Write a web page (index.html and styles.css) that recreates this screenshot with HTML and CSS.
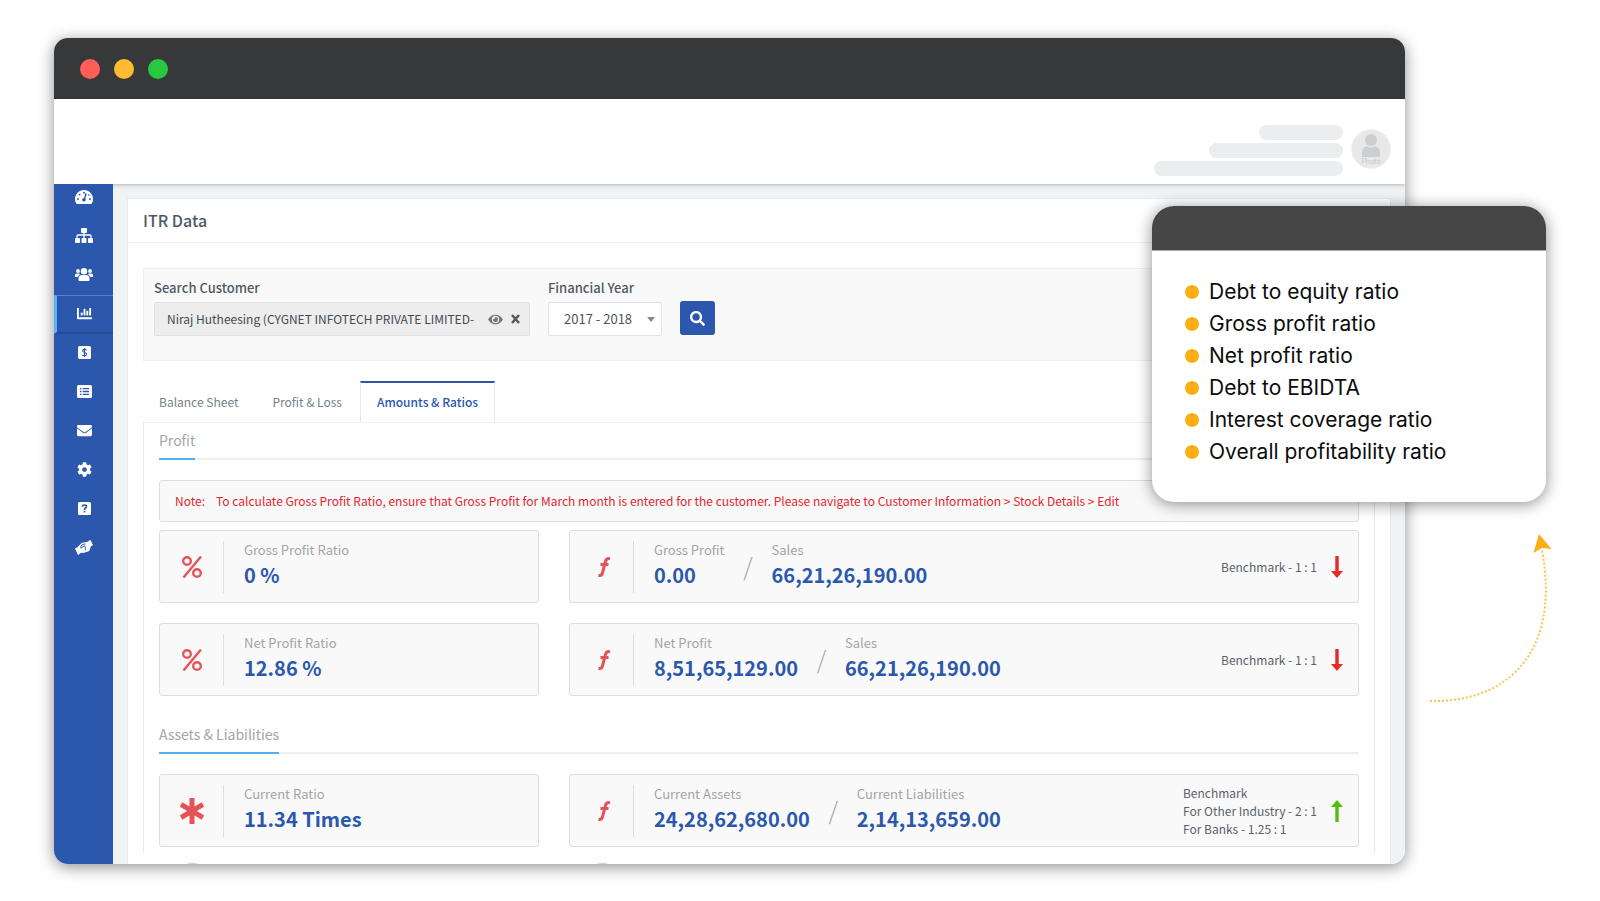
FILE: index.html
```html
<!DOCTYPE html>
<html lang="en">
<head>
<meta charset="utf-8">
<title>ITR Data</title>
<link rel="stylesheet" href="styles.css">
</head>
<body>
<svg class="defs" aria-hidden="true">
  <symbol id="percent" viewBox="0 0 20 22"><g fill="none" stroke="currentColor" stroke-width="2.400"><circle cx="5" cy="5" r="3.800"/><circle cx="15" cy="17" r="3.800"/><path d="M19 .5 1.500 21.500"/></g></symbol>
  <symbol id="func" viewBox="0 0 12 20"><path d="M12 1.700Q8.300 1 7.500 4.500L4.300 16.500Q3.700 18.700.5 18.500M2.500 7.500h8" fill="none" stroke="currentColor" stroke-width="3"/></symbol>
  <symbol id="asterisk" viewBox="0 0 24 26"><path d="M12 0v26M1 6.500l22 13M23 6.500l-22 13" fill="none" stroke="currentColor" stroke-width="5"/></symbol>
  <symbol id="arrow" viewBox="0 0 12 22"><path d="M4.300 0h3.400v15H12l-6 7-6-7h4.300z" fill="currentColor"/></symbol>
</svg>

<div class="window">
  <div class="titlebar"><i class="dot red"></i><i class="dot yellow"></i><i class="dot green"></i></div>
  <header class="header">
    <div class="lines"><i class="line short"></i><i class="line medium"></i><i class="line long"></i></div>
    <div class="avatar">
      <svg width="20" height="24" viewBox="0 0 20 24"><circle cx="10" cy="6" r="6" fill="#ccced1"/><path d="M1 23v-4c0-4 2-6 5-7 3 2 5 2 8 0 3 1 5 3 5 7v4z" fill="#ccced1"/></svg>
      <span>Photo</span>
    </div>
  </header>

  <div class="body">
    <nav class="sidebar">
      <a href="#" aria-label="Dashboard"><svg width="18" height="14" viewBox="0 32 576 448"><path d="M288 32C129 32 0 161 0 320c0 53 14 102 39 145 6 9 16 15 27 15h444c11 0 21-6 27-15 25-43 39-92 39-145 0-159-129-288-288-288z" fill="#fff"/><g fill="#2b58ad"><circle cx="288" cy="118" r="30"/><circle cx="146" cy="178" r="30"/><circle cx="96" cy="320" r="30"/><circle cx="480" cy="320" r="30"/><circle cx="440" cy="190" r="26"/><path d="M335 130l42 14-48 160c30 30 18 92-41 96-56-2-80-60-40-96 10-10 24-14 40-16z"/></g></svg></a>
      <a href="#" aria-label="Hierarchy"><svg width="18" height="15" viewBox="0 0 18 15" fill="#fff"><rect x="6" width="6" height="5" rx="1"/><rect y="10" width="5" height="5" rx="1"/><rect x="6.500" y="10" width="5" height="5" rx="1"/><rect x="13" y="10" width="5" height="5" rx="1"/><path d="M2 10V8q0-1 1-1h12q1 0 1 1v2M9 5v5" fill="none" stroke="#fff" stroke-width="1.300"/></svg></a>
      <a href="#" aria-label="Customers"><svg width="18" height="13" viewBox="0 0 18 13" fill="#fff"><circle cx="9" cy="3.200" r="3.200"/><circle cx="3" cy="3" r="1.900"/><circle cx="15" cy="3" r="1.900"/><path d="M4 13q-.5 0-.5-1v-1.500C3.500 8 5 7 6.500 7h5c1.500 0 3 1 3 3.500V12q0 1-.7 1zM0 9V7.500Q0 5.500 2 5.500h2q.8 0 1.300.5Q3.300 7 3 9zM18 9V7.500q0-2-2-2h-2q-.8 0-1.300.5 2 1 2.300 3z"/></svg></a>
      <a href="#" class="active" aria-label="Reports"><svg width="15" height="15" viewBox="0 0 512 512" fill="#fff"><path d="M333 320h38q13 0 13-13V173q0-13-13-13h-38q-13 0-13 13v134q0 13 13 13zm96 0h38q13 0 13-13V77q0-13-13-13h-38q-13 0-13 13v230q0 13 13 13zm-288 0h38q13 0 13-13v-70q0-13-13-13h-38q-13 0-13 13v70q0 13 13 13zm96 0h38q13 0 13-13V109q0-13-13-13h-38q-13 0-13 13v198q0 13 13 13zM496 384H64V80q0-16-16-16H16Q0 64 0 80v336q0 32 32 32h464q16 0 16-16v-32q0-16-16-16z"/></svg></a>
      <a href="#" aria-label="Payments"><svg width="13" height="13" viewBox="0 0 13 13"><rect width="13" height="13" rx="1.500" fill="#fff"/><path d="M8.600 4.300Q8 3.400 6.500 3.400 4.600 3.400 4.600 4.800 4.600 6 6.500 6.500 8.600 7 8.600 8.300 8.600 9.700 6.500 9.700 4.900 9.700 4.300 8.700M6.500 2v9" fill="none" stroke="#2b58ad" stroke-width="1.100"/></svg></a>
      <a href="#" aria-label="Lists"><svg width="15" height="13" viewBox="0 0 15 13"><rect width="15" height="13" rx="1.500" fill="#fff"/><path d="M3 3.700h1.500M3 6.500h1.500M3 9.300h1.500M5.800 3.700H12M5.800 6.500H12M5.800 9.300H12" stroke="#2b58ad" stroke-width="1.300"/></svg></a>
      <a href="#" aria-label="Messages"><svg width="15" height="15" viewBox="0 0 512 512" fill="#fff"><path d="M502 191c4-3 10 0 10 5v204c0 27-21 48-48 48H48c-27 0-48-21-48-48V196c0-5 6-8 10-5 22 17 52 40 154 114 21 15 57 47 92 47 36 0 72-33 92-47 102-74 132-97 154-114zM256 320c23 0 57-29 73-41 133-97 143-105 174-129 6-5 9-12 9-19v-19c0-27-21-48-48-48H48c-27 0-48 21-48 48v19c0 7 3 14 9 19 31 24 41 32 174 129 16 12 50 41 73 41z"/></svg></a>
      <a href="#" aria-label="Settings"><svg width="15" height="15" viewBox="0 0 512 512" fill="#fff"><path d="M487.400 315.700l-42.600-24.600c4.300-23.200 4.300-47 0-70.200l42.600-24.600c4.900-2.800 7.100-8.600 5.500-14-11.100-35.600-30-67.800-54.700-94.600-3.800-4.100-10-5.100-14.800-2.300L380.800 110c-17.900-15.400-38.500-27.300-60.800-35.100V25.800c0-5.600-3.900-10.500-9.400-11.700-36.700-8.200-74.300-7.800-109.200 0-5.500 1.200-9.400 6.100-9.400 11.700V75c-22.200 7.900-42.800 19.800-60.800 35.100L88.700 85.500c-4.900-2.800-11-1.900-14.800 2.300-24.700 26.700-43.600 58.900-54.700 94.600-1.700 5.400.6 11.200 5.500 14L67.300 221c-4.300 23.200-4.300 47 0 70.200l-42.600 24.600c-4.900 2.800-7.100 8.600-5.500 14 11.100 35.600 30 67.800 54.700 94.600 3.800 4.100 10 5.100 14.800 2.300l42.600-24.600c17.900 15.400 38.500 27.300 60.800 35.100v49.200c0 5.600 3.900 10.500 9.400 11.700 36.700 8.200 74.300 7.800 109.200 0 5.500-1.200 9.400-6.100 9.400-11.700v-49.200c22.200-7.900 42.800-19.800 60.800-35.100l42.600 24.600c4.900 2.800 11 1.900 14.800-2.300 24.700-26.700 43.600-58.900 54.700-94.600 1.500-5.500-.7-11.300-5.600-14.100zM256 336c-44.100 0-80-35.900-80-80s35.900-80 80-80 80 35.900 80 80-35.900 80-80 80z"/></svg></a>
      <a href="#" aria-label="Help"><svg width="13" height="13" viewBox="0 0 13 13"><rect width="13" height="13" rx="1.500" fill="#fff"/><path d="M4.400 4.700Q4.500 3 6.500 3t2 1.600Q8.500 5.700 7.200 6.300 6.500 6.700 6.500 7.900M6.500 9v1.600" fill="none" stroke="#2b58ad" stroke-width="1.600"/></svg></a>
      <a href="#" aria-label="Partners"><svg width="18" height="15" viewBox="0 0 18 15"><path d="M0 8.500l2.500-1.300L6 3.600Q7 2.600 8.500 2.500L12 2l2.200-1.500L15.500 0 18 5l-2 1.200-1.500 4q-.6 1.300-2 1.600L8 13l-2-.2L3 15z" fill="#fff"/><path d="M10.500 3.800 7 4.800Q6 5.600 5.700 8q1.500.3 2.300-1.800h2q.7 2 .3 4.300" fill="none" stroke="#2b58ad" stroke-width=".9"/></svg></a>
    </nav>

    <main class="content">
      <section class="panel">
        <h1 class="panel-title">ITR Data</h1>
        <div class="panel-body">
          <form class="filters">
            <div class="field customer">
              <label for="customer">Search Customer</label>
              <div class="customer-box">
                <input id="customer" type="text" value="Niraj Hutheesing (CYGNET INFOTECH PRIVATE LIMITED-" readonly>
                <button type="button" aria-label="View customer"><svg width="15" height="13" viewBox="0 0 576 512"><path fill="#6d7681" d="M572.500 241.400C518.300 135.600 410.900 64 288 64S57.700 135.600 3.500 241.400a32.400 32.400 0 0 0 0 29.200C57.700 376.400 165.100 448 288 448s230.300-71.600 284.500-177.400a32.400 32.400 0 0 0 0-29.200zM288 400a144 144 0 1 1 144-144 144 144 0 0 1-144 144zm0-240a95 95 0 0 0-25.300 3.800 48 48 0 0 1-66.900 66.900A96 96 0 1 0 288 160z"/></svg></button>
                <button type="button" aria-label="Clear customer"><svg width="9" height="10" viewBox="0 0 9 10"><path d="M1 1l7 8M8 1 1 9" stroke="#535b66" stroke-width="2.600"/></svg></button>
              </div>
            </div>
            <div class="field year">
              <label for="year">Financial Year</label>
              <div class="select-box"><select id="year"><option>2017 - 2018</option></select></div>
            </div>
            <button class="search" type="button" aria-label="Search"><svg width="15" height="15" viewBox="0 0 512 512"><path fill="#fff" d="M505 442.700L405.300 343c-4.500-4.500-10.600-7-17-7H372c27.600-35.300 44-79.700 44-128C416 93.100 322.900 0 208 0S0 93.100 0 208s93.100 208 208 208c48.300 0 92.700-16.400 128-44v16.300c0 6.400 2.500 12.500 7 17l99.700 99.700c9.400 9.400 24.600 9.400 33.900 0l28.300-28.300c9.400-9.400 9.400-24.600.1-34zM208 336c-70.700 0-128-57.200-128-128 0-70.700 57.200-128 128-128 70.700 0 128 57.200 128 128 0 70.700-57.200 128-128 128z"/></svg></button>
          </form>

          <div class="tabs">
            <a href="#">Balance Sheet</a>
            <a href="#">Profit &amp; Loss</a>
            <a href="#" class="current">Amounts &amp; Ratios</a>
          </div>

          <div class="tab-panel">
            <h2 class="section"><span>Profit</span></h2>
            <p class="note"><span>Note:</span>To calculate Gross Profit Ratio, ensure that Gross Profit for March month is entered for the customer. Please navigate to Customer Information &gt; Stock Details &gt; Edit</p>
            <div class="row">
              <div class="card">
                <div class="symbol"><svg width="20" height="22"><use href="#percent"/></svg></div>
                <div class="metric"><span>Gross Profit Ratio</span><b>0 %</b></div>
              </div>
              <div class="card">
                <div class="symbol func"><svg width="12" height="20"><use href="#func"/></svg></div>
                <div class="metric"><span>Gross Profit</span><b>0.00</b></div>
                <i class="slash">/</i>
                <div class="metric"><span>Sales</span><b>66,21,26,190.00</b></div>
                <p class="benchmark">Benchmark - 1 : 1</p>
                <svg class="trend down" width="12" height="22"><use href="#arrow"/></svg>
              </div>
            </div>
            <div class="row">
              <div class="card">
                <div class="symbol"><svg width="20" height="22"><use href="#percent"/></svg></div>
                <div class="metric"><span>Net Profit Ratio</span><b>12.86 %</b></div>
              </div>
              <div class="card">
                <div class="symbol func"><svg width="12" height="20"><use href="#func"/></svg></div>
                <div class="metric"><span>Net Profit</span><b>8,51,65,129.00</b></div>
                <i class="slash">/</i>
                <div class="metric"><span>Sales</span><b>66,21,26,190.00</b></div>
                <p class="benchmark">Benchmark - 1 : 1</p>
                <svg class="trend down" width="12" height="22"><use href="#arrow"/></svg>
              </div>
            </div>
            <h2 class="section"><span>Assets &amp; Liabilities</span></h2>
            <div class="row">
              <div class="card">
                <div class="symbol"><svg width="24" height="26"><use href="#asterisk"/></svg></div>
                <div class="metric"><span>Current Ratio</span><b>11.34 Times</b></div>
              </div>
              <div class="card">
                <div class="symbol func"><svg width="12" height="20"><use href="#func"/></svg></div>
                <div class="metric"><span>Current Assets</span><b>24,28,62,680.00</b></div>
                <i class="slash">/</i>
                <div class="metric"><span>Current Liabilities</span><b>2,14,13,659.00</b></div>
                <p class="benchmark">Benchmark<br>For Other Industry - 2 : 1<br>For Banks - 1.25 : 1</p>
                <svg class="trend up" width="12" height="22"><use href="#arrow"/></svg>
              </div>
            </div>
          </div>
          <div class="row next">
            <div><i></i></div>
            <div><i></i></div>
          </div>
        </div>
      </section>
    </main>
  </div>
</div>

<aside class="callout">
  <div class="callout-head"></div>
  <ul>
    <li>Debt to equity ratio</li>
    <li>Gross profit ratio</li>
    <li>Net profit ratio</li>
    <li>Debt to EBIDTA</li>
    <li>Interest coverage ratio</li>
    <li>Overall profitability ratio</li>
  </ul>
</aside>
<svg class="pointer" width="124" height="172" viewBox="1429 532 124 172"><path d="M1430 701C1500 703 1562 660 1542 550" fill="none" stroke="#ffc14d" stroke-width="2" stroke-dasharray="2 2"/><path d="M1539 534l12.500 15-9.500-1-8.500 5z" fill="#fdae14"/></svg>
</body>
</html>
```
FILE: styles.css
```css
* { box-sizing: border-box; }
body {
  margin: 0;
  padding: 38px 195px 37px 54px;
  position: relative;
  height: 100vh;
  overflow: hidden;
  background: #fff;
  color: #4e5966;
  font: 13px/18px "Noto Sans CJK SC", "Noto Sans", sans-serif;
}
h1, h2, p, ul { margin: 0; padding: 0; font-weight: 400; }
a { color: inherit; text-decoration: none; }
button { border: 0; padding: 0; background: none; display: flex; align-items: center; justify-content: center; }
svg { display: block; flex: none; }
.defs { position: absolute; width: 0; height: 0; }

.window {
  height: 100%;
  display: flex;
  flex-direction: column;
  overflow: hidden;
  border-radius: 14px;
  background: #fff;
  box-shadow: 0 3px 16px rgba(0, 0, 0, .45);
}
.titlebar { flex: none; height: 61px; background: #373839; display: flex; align-items: center; gap: 14px; padding-left: 26px; }
.dot { width: 20px; height: 20px; border-radius: 50%; }
.red { background: #ff5f57; }
.yellow { background: #febc2e; }
.green { background: #28c840; }

.header {
  flex: none;
  height: 85px;
  display: flex;
  justify-content: flex-end;
  align-items: flex-end;
  gap: 8px;
  padding: 0 14px 8px 0;
  background: #fff;
  box-shadow: 0 1px 4px rgba(0, 0, 0, .25);
  z-index: 1;
}
.lines { display: flex; flex-direction: column; align-items: flex-end; gap: 3px; }
.line { height: 15px; border-radius: 8px; background: #ecedef; }
.short { width: 84px; }
.medium { width: 134px; }
.long { width: 189px; }
.avatar {
  width: 40px;
  height: 40px;
  margin-bottom: 7px;
  border-radius: 50%;
  background: #e8e8e9;
  border: 1px solid #f1f1f1;
  display: flex;
  flex-direction: column;
  align-items: center;
  padding-top: 4px;
  color: #c4c5c7;
  font: 7px/8px Inter, sans-serif;
}

.body { flex: 1; min-height: 0; display: flex; background: #eff3f5; }
.sidebar { flex: none; width: 59px; background: #2b58ad; z-index: 2; }
.sidebar a { height: 39px; padding: 0 0 2px 1px; display: flex; align-items: center; justify-content: center; }
.sidebar a:first-child { height: 33px; padding-bottom: 8px; }
.sidebar .active { border-left: 3px solid #57b3f5; border-top: 1px solid #5a7fc4; border-bottom: 2px solid #244b95; padding-right: 3px; }

.content { flex: 1; min-width: 0; padding: 14px 14px 0; overflow: hidden; }
.panel { background: #fff; border: 1px solid #e6eaec; }
.panel-title { height: 44px; padding: 0 15px; border-bottom: 1px solid #eef0f1; font-size: 16px; line-height: 42px; font-weight: 500; }
.panel-body { padding: 25px 15px 0; }

.filters { display: flex; height: 93px; padding: 10px; background: #f9f9f9; border: 1px solid #eee; }
.field label { display: block; height: 23px; line-height: 18px; font-weight: 500; }
.customer { width: 376px; margin-right: 18px; }
.customer-box { height: 34px; display: flex; align-items: center; gap: 8px; padding: 0 9px 0 12px; background: #ededed; border: 1px solid #dfe1e8; border-radius: 2px; }
.customer-box input { flex: 1; min-width: 0; border: 0; padding: 0; background: none; color: #444b55; font: inherit; font-size: 12px; }
.year { width: 114px; margin-right: 18px; }
.select-box { position: relative; }
.select-box::after { content: ""; position: absolute; right: 7px; top: 15px; border: 4px solid transparent; border-top: 5px solid #888; border-bottom: 0; pointer-events: none; }
.select-box select { appearance: none; width: 100%; height: 34px; padding: 0 15px; background: #fff; border: 1px solid #dfe3ec; border-radius: 2px; color: #4e545c; font: inherit; }
.search { width: 35px; height: 34px; margin-top: 22px; background: #2b58ad; border-radius: 3px; }

.tabs { display: flex; height: 41px; margin-top: 20px; color: #74828a; font-size: 12px; }
.tabs a { padding: 0 16px; line-height: 42px; }
.tabs a + a { margin-left: 2px; }
.tabs .current { color: #2b58ad; font-weight: 500; line-height: 38px; border: 1px solid #e8e8e8; border-top: 2px solid #2b58ad; border-bottom: 0; }

.tab-panel { padding: 6px 15px; border: 1px solid #e8e8e8; border-top-color: #f2f2f2; border-bottom: 0; }
.section { height: 31px; border-bottom: 2px solid #eee; margin-bottom: 20px; font-size: 14px; line-height: 23px; color: #a2a5a7; }
.section span { display: inline-block; height: 31px; border-bottom: 2px solid #57adf0; }
.note { height: 42px; margin-bottom: 8px; padding: 0 15px; border: 1px solid #ddd; border-radius: 3px; background: #f9f9f9; color: #e3262b; font-size: 12px; line-height: 40px; white-space: nowrap; overflow: hidden; }
.note span { margin-right: 11px; }

.row { display: grid; grid-template-columns: 380fr 790fr; gap: 30px; margin-bottom: 20px; }
.row + .section { margin-top: 27px; }
.card { height: 73px; display: flex; align-items: center; border: 1px solid #ddd; border-radius: 3px; background: #f9f9f9; padding-right: 15px; white-space: nowrap; }
.symbol { width: 64px; height: 52px; margin-right: 20px; border-right: 1px solid #ddd; display: flex; align-items: center; justify-content: center; color: #e5535a; }
.func { padding-left: 4px; }
.metric { display: flex; flex-direction: column; padding-bottom: 4px; }
.metric span { color: #a2a5a7; line-height: 20px; }
.metric b { color: #2b58ad; font-size: 20px; line-height: 30px; }
.slash { width: 47px; padding-bottom: 2px; text-align: center; color: #a2a5a7; font-size: 24px; font-style: normal; font-weight: 300; line-height: 30px; }
.benchmark { margin-left: auto; color: #59616c; font-size: 12px; }
.trend { margin-left: 14px; }
.down { color: #e62b2b; }
.up { color: #55bd0c; transform: rotate(180deg); }
.tab-panel .row:last-child { margin-bottom: 0; }
.next { margin: 10px 16px 0; opacity: .35; }
.next div { height: 20px; padding-left: 27px; border: 1px solid #ddd; border-width: 0 1px; }
.next i { display: block; width: 11px; height: 8px; background: #e5535a; border-radius: 3px 3px 0 0; }

.callout {
  position: absolute;
  top: 206px;
  right: 54px;
  width: 394px;
  border-radius: 22px;
  overflow: hidden;
  background: #fff;
  box-shadow: 0 2px 16px rgba(0, 0, 0, .45);
  z-index: 3;
}
.callout-head { height: 45px; background: #464646; border-bottom: 1px solid #aaa; }
.callout ul { padding: 25px 33px 34px; list-style: none; color: #0c0c0c; font: 21px/32px Inter, sans-serif; }
.callout li { display: flex; align-items: center; gap: 10px; }
.callout li::before { content: ""; width: 14px; height: 14px; border-radius: 50%; background: #fdae14; }
.pointer { position: absolute; top: 532px; right: 47px; }
```
